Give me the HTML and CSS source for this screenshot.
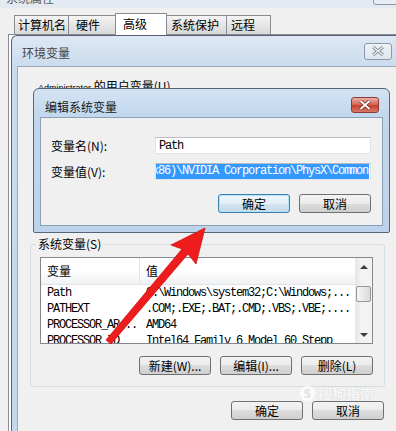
FILE: index.html
```html
<!DOCTYPE html>
<html lang="zh-CN">

<head>
    <meta charset="UTF-8">
    <title>环境变量</title>
    <link rel="stylesheet" href="styles.css">
</head>

<body>
    <div class="screen">
        <div class="sys-title">
            <span>系统属性</span>
            <i class="sys-close"></i>
        </div>

        <div class="tabs">
            <div class="tab tab-1">计算机名</div>
            <div class="tab tab-2">硬件</div>
            <div class="tab tab-3 active">高级</div>
            <div class="tab tab-4">系统保护</div>
            <div class="tab tab-5">远程</div>
        </div>

        <div class="tab-body">
            <!-- 环境变量窗口 -->
            <div class="env-window">
                <div class="env-title">
                    <span>环境变量</span>
                    <a href="#" class="env-close">
                        <svg width="14" height="10" viewBox="0 0 14 10">
                            <path d="M2 1 L12 9 M12 1 L2 9" stroke="#7d8793" stroke-width="3" />
                            <path d="M2 1 L12 9 M12 1 L2 9" stroke="#f4f6f8" stroke-width="1.2" />
                        </svg>
                    </a>
                </div>
                <div class="env-client">
                    <div class="user-vars">
                        <p class="user-label"><span class="latin">Administrator</span> 的用户变量(U)</p>
                    </div>

                    <fieldset class="group">
                        <legend>系统变量(S)</legend>
                        <div class="list">
                            <div class="list-main">
                                <div class="list-head">
                                    <div class="col-1">变量</div>
                                    <div class="col-2">值</div>
                                </div>
                                <div class="row">
                                    <div class="col-1">Path</div>
                                    <div class="col-2">C:\Windows\system32;C:\Windows;...</div>
                                </div>
                                <div class="row">
                                    <div class="col-1">PATHEXT</div>
                                    <div class="col-2">.COM;.EXE;.BAT;.CMD;.VBS;.VBE;....</div>
                                </div>
                                <div class="row">
                                    <div class="col-1">PROCESSOR_AR...</div>
                                    <div class="col-2">AMD64</div>
                                </div>
                                <div class="row">
                                    <div class="col-1">PROCESSOR_ID</div>
                                    <div class="col-2">Intel64 Family 6 Model 60 Stepp</div>
                                </div>
                            </div>
                            <div class="scrollbar">
                                <div class="sb-btn"><i class="arrow-up"></i></div>
                                <div class="sb-track"><div class="thumb"></div></div>
                                <div class="sb-btn"><i class="arrow-down"></i></div>
                            </div>
                        </div>
                        <div class="btn-row">
                            <a href="#" class="btn">新建(W)...</a>
                            <a href="#" class="btn">编辑(I)...</a>
                            <a href="#" class="btn">删除(L)</a>
                        </div>
                    </fieldset>

                    <div class="env-actions">
                        <a href="#" class="btn">确定</a>
                        <a href="#" class="btn">取消</a>
                    </div>
                </div>
            </div>
        </div>

        <!-- 编辑系统变量 弹窗 -->
        <div class="edit-dialog">
            <div class="edit-title">
                <span>编辑系统变量</span>
                <a href="#" class="edit-close">
                    <svg width="14" height="10" viewBox="0 0 14 10">
                        <path d="M2.5 1 L11.5 9 M11.5 1 L2.5 9" stroke="#7a2a22" stroke-width="3.4" />
                        <path d="M2.5 1 L11.5 9 M11.5 1 L2.5 9" stroke="#fff" stroke-width="1.8" />
                    </svg>
                </a>
            </div>
            <div class="edit-client">
                <p class="field">
                    <label for="varname">变量名(N):</label>
                    <span class="ipt" id="varname">Path</span>
                </p>
                <p class="field">
                    <label for="varvalue">变量值(V):</label>
                    <span class="ipt ipt-sel" id="varvalue"><span class="sel">Files (x86)\NVIDIA Corporation\PhysX\Common</span></span>
                </p>
                <div class="edit-btns">
                    <a href="#" class="btn btn-default">确定</a>
                    <a href="#" class="btn">取消</a>
                </div>
            </div>
        </div>

        <div class="watermark"><i>S</i>搜狗指南</div>

        <svg class="red-arrow" width="396" height="431" viewBox="0 0 396 431">
            <polygon points="205,228 171,245 182,249 106,340 111,344 188,254 196,264" fill="#ee1c1c" stroke="#d01010" stroke-width="0.8" stroke-linejoin="round" />
        </svg>
    </div>
</body>

</html>
```

FILE: styles.css
```css
* {
    box-sizing: border-box;
}

body {
    margin: 0;
    background-color: #f0f0f0;
    font-family: "Noto Sans CJK SC", "Liberation Sans", sans-serif;
    font-size: 12px;
    color: #000;
}

p,
fieldset,
legend {
    margin: 0;
    padding: 0;
}

a {
    color: #000;
    text-decoration: none;
}

.screen {
    position: relative;
    display: flex;
    flex-direction: column;
    width: 396px;
    height: 431px;
    overflow: hidden;
}

/* 系统属性 标题栏(只露出底部一点) */

.sys-title {
    position: relative;
    height: 8px;
    padding-left: 6px;
    overflow: hidden;
    background: #e4eaf1;
}

.sys-title span {
    display: block;
    margin-top: -9px;
    line-height: 14px;
    color: #5a5a5a;
}

.sys-title .sys-close {
    position: absolute;
    right: -3px;
    top: -4px;
    width: 26px;
    height: 9px;
    border: 1px solid #8d98a6;
    border-radius: 3px;
    background: #e9edf2;
}

/* 选项卡 */

.tabs {
    display: flex;
    align-items: flex-end;
    height: 26px;
    padding-left: 14px;
}

.tab {
    height: 19px;
    margin-right: -1px;
    padding-left: 3px;
    line-height: 18px;
    white-space: nowrap;
    border: 1px solid #898c95;
    border-bottom: 0;
    background: linear-gradient(#f4f4f4, #e6e6e6 50%, #d8d8d8);
}

.tab-1 { width: 55px; }
.tab-2 { width: 48px; padding-left: 7px; }
.tab-3 { width: 52px; }
.tab-4 { width: 61px; padding-left: 4px; }
.tab-5 { width: 45px; padding-left: 4px; }

.tab.active {
    position: relative;
    z-index: 2;
    height: 22px;
    margin-bottom: -1px;
    padding-left: 7px;
    line-height: 20px;
    background: #fff;
}

.tab-body {
    flex: 1;
    display: flex;
    margin-left: 8px;
    padding-left: 2px;
    border-left: 1px solid #898c95;
    border-top: 1px solid #898c95;
    background: #fff;
}

/* 环境变量 窗口 */

.env-window {
    flex-shrink: 0;
    display: flex;
    flex-direction: column;
    width: 392px;
    padding: 0 5px;
    border: 1px solid #56626f;
    border-bottom: 0;
    border-radius: 6px 6px 0 0;
    background: linear-gradient(#dde8f4, #cbdcee 30px, #c4d7ec);
}

.env-title {
    display: flex;
    align-items: center;
    justify-content: space-between;
    height: 30px;
    padding: 2px 5px 0;
    color: #454545;
}

.env-close {
    display: flex;
    align-items: center;
    justify-content: center;
    width: 28px;
    height: 17px;
    margin-top: -2px;
    border: 1px solid #8c98a7;
    border-radius: 3px;
    background: linear-gradient(#eef2f7, #dfe6ee);
}

.env-client {
    flex: 1;
    display: flex;
    flex-direction: column;
    border: 1px solid #98a9bc;
    border-bottom: 0;
    background: #f0f0f0;
}

.user-vars {
    height: 170px;
    padding: 12px 0 0 20px;
}

.user-label {
    line-height: 14px;
}

.user-label .latin {
    font-family: "Liberation Sans", sans-serif;
    font-size: 9px;
}

.group {
    margin: 0 11px 0 12px;
    padding: 6px 11px 11px 9px;
    border: 1px solid #d5dde3;
    border-radius: 3px;
}

.group legend {
    margin-left: -4px;
    padding: 0 2px;
    line-height: 14px;
}

.list {
    display: flex;
    height: 87px;
    border: 1px solid #828790;
    background: #fff;
}

.list-main {
    flex: 1;
    overflow: hidden;
}

.list-head {
    display: flex;
    height: 27px;
    line-height: 26px;
    border-bottom: 1px solid #e2e3e5;
    background: linear-gradient(#fff, #fff 45%, #f1f2f4);
}

.list-head .col-1 {
    border-right: 1px solid #e3e4e6;
}

.col-1 {
    flex-shrink: 0;
    width: 99px;
    padding-left: 6px;
    overflow: hidden;
    white-space: nowrap;
}

.col-2 {
    padding-left: 6px;
    white-space: nowrap;
}

.row {
    display: flex;
    height: 16px;
    line-height: 16px;
    font-family: "Liberation Mono", monospace;
    font-size: 12px;
    letter-spacing: -1.2px;
}

/* 滚动条 */

.scrollbar {
    display: flex;
    flex-direction: column;
    width: 17px;
    background: linear-gradient(90deg, #e6e6e6, #f3f3f3 40%, #f3f3f3);
}

.sb-btn {
    display: flex;
    align-items: center;
    justify-content: center;
    height: 17px;
}

.arrow-up {
    border: 4px solid transparent;
    border-top: 0;
    border-bottom: 4px solid #3c3c3c;
}

.arrow-down {
    border: 4px solid transparent;
    border-bottom: 0;
    border-top: 4px solid #3c3c3c;
}

.sb-track {
    flex: 1;
    padding-top: 11px;
}

.thumb {
    height: 16px;
    margin: 0 1px;
    border: 1px solid #979797;
    border-radius: 2px;
    background: linear-gradient(90deg, #f5f5f5, #e9e9e9 50%, #d9d9d9);
}

/* 按钮 */

.btn-row,
.env-actions,
.edit-btns {
    display: flex;
    justify-content: flex-end;
    gap: 9px;
}

.btn-row {
    margin-top: 12px;
}

.env-actions {
    margin-top: 14px;
    padding-right: 12px;
}

.btn {
    display: block;
    width: 72px;
    height: 19px;
    line-height: 17px;
    text-align: center;
    white-space: nowrap;
    border: 1px solid #707070;
    border-radius: 3px;
    background: linear-gradient(#f3f3f3, #ebebeb 50%, #dddddd 50%, #cfcfcf);
}

.btn-default {
    border-color: #3c7fb1;
    box-shadow: inset 0 0 0 1px #b4e2f8;
    background: linear-gradient(#eef7fc, #e3eff6 50%, #d4e5ef 50%, #c6dbe8);
}

/* 编辑系统变量 弹窗 */

.edit-dialog {
    position: absolute;
    left: 33px;
    top: 88px;
    display: flex;
    flex-direction: column;
    width: 357px;
    height: 145px;
    padding: 0 6px 6px;
    border: 1px solid #55657a;
    border-radius: 6px 6px 2px 2px;
    background: linear-gradient(#d3e3f3, #c2d7ed 28px, #bcd3eb);
    z-index: 10;
}

.edit-title {
    display: flex;
    justify-content: space-between;
    height: 28px;
    padding: 4px 4px 0 5px;
    line-height: 28px;
    color: #1a1a1a;
}

.edit-close {
    display: flex;
    align-items: center;
    justify-content: center;
    width: 28px;
    height: 16px;
    margin-top: 4px;
    border: 1px solid #8c3b33;
    border-radius: 3px;
    background: linear-gradient(#eab0a6, #d66a5c 45%, #c6402f 55%, #d97767);
}

.edit-client {
    flex: 1;
    padding: 19px 11px 0 10px;
    border: 1px solid #8ca1b7;
    background: #f0f0f0;
}

.field {
    display: flex;
    align-items: center;
    height: 17px;
    margin-bottom: 9px;
}

.field label {
    width: 104px;
    flex-shrink: 0;
}

.ipt {
    flex: 1;
    display: flex;
    align-items: center;
    height: 17px;
    padding: 0 1px 0 3px;
    overflow: hidden;
    font-family: "Liberation Mono", monospace;
    font-size: 12px;
    letter-spacing: -1.2px;
    white-space: nowrap;
    border: 1px solid #e1e3e8;
    border-top-color: #b9bcc3;
    background: #fff;
}

.ipt-sel {
    justify-content: flex-end;
    padding: 0 1px;
}

.ipt-sel .sel {
    flex-shrink: 0;
    height: 15px;
    padding-right: 1px;
    line-height: 15px;
    color: #fff;
    background: #3399ff;
}

.edit-btns {
    margin-top: 14px;
}

/* 水印 */

.watermark {
    position: absolute;
    left: 300px;
    top: 383px;
    display: flex;
    align-items: center;
    gap: 3px;
    font-size: 14px;
    font-weight: bold;
    color: rgba(255, 255, 255, .85);
    text-shadow: 0 0 1px rgba(120, 120, 120, .35);
}

.watermark i {
    display: block;
    width: 15px;
    height: 15px;
    line-height: 15px;
    font-style: normal;
    font-size: 11px;
    text-align: center;
    color: #e6e6e6;
    border-radius: 50%;
    background: rgba(255, 255, 255, .8);
}

.red-arrow {
    position: absolute;
    left: 0;
    top: 0;
    z-index: 20;
    pointer-events: none;
}
```
